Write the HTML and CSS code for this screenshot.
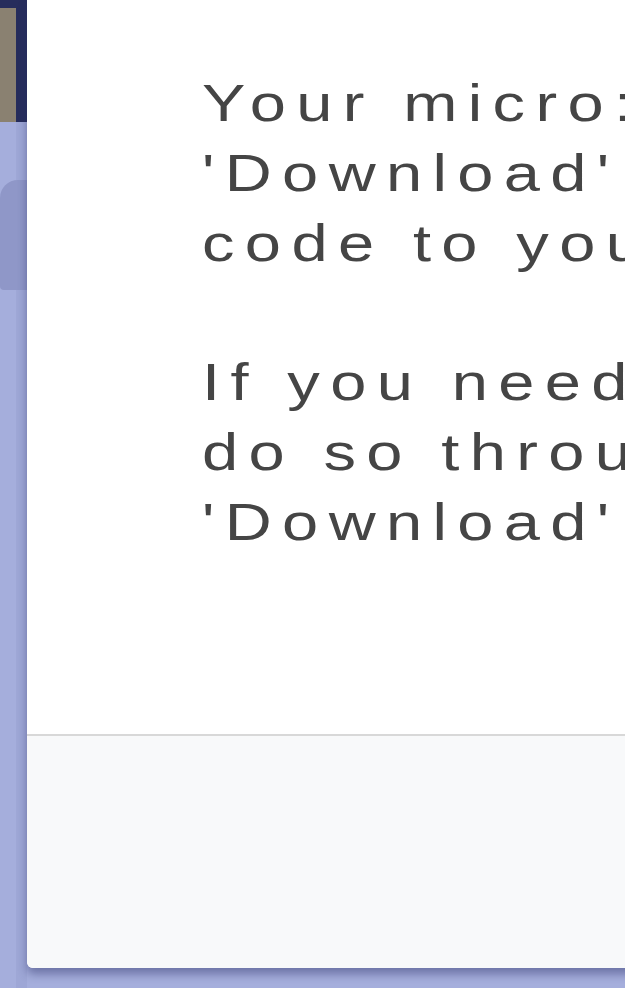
FILE: index.html
```html
<!DOCTYPE html>
<html>
<head>
<meta charset="utf-8">
<link rel="stylesheet" href="styles.css">
</head>
<body>
<div class="page">
  <div class="backdrop">
    <div class="topbar"><div class="tile"></div></div>
    <div class="patch"></div>
  </div>
  <div class="dialog">
    <div class="dialog-body">
      <div class="text">
        <p class="para"><span class="line">Your micro:bit is connected and ready!</span><span class="line">'Download' will now send your</span><span class="line">code to your micro:bit directly.</span></p>
        <p class="para"><span class="line">If you need to pair another device, you can</span><span class="line">do so through the gear menu or the</span><span class="line">'Download' menu.</span></p>
      </div>
    </div>
    <div class="dialog-footer"></div>
  </div>
</div>
</body>
</html>
```
FILE: styles.css
```css
html, body {
  margin: 0;
  padding: 0;
  height: 100%;
  overflow: hidden;
  background: #a5aedc;
}
.page {
  display: flex;
  height: 988px;
  width: 625px;
  overflow: hidden;
}
.backdrop {
  flex: 0 0 27px;
  display: flex;
  flex-direction: column;
  background: linear-gradient(90deg, #a5aedc 0 16px, #9ea7d6 16px 27px);
}
.topbar {
  height: 122px;
  background: #262d5c;
  padding: 8px 11px 0 0;
  box-sizing: border-box;
  display: flex;
}
.tile {
  flex: 1;
  background: #8a8171;
}
.patch {
  margin-top: 58px;
  height: 110px;
  background: #8f97c8;
  border-top-left-radius: 18px;
  border-bottom-left-radius: 4px;
}
.dialog {
  flex: 0 0 720px;
  height: 968px;
  background: #ffffff;
  border-bottom-left-radius: 6px;
  box-shadow: 0 6px 10px rgba(40, 44, 100, 0.45);
  display: flex;
  flex-direction: column;
  overflow: hidden;
}
.dialog-body {
  height: 734px;
  box-sizing: border-box;
  padding: 68px 0 0 175px;
  overflow: hidden;
}
.text {
  transform: scaleX(1.25);
  transform-origin: 0 0;
}
.para {
  margin: 0;
  font-family: "Liberation Sans", Arial, sans-serif;
  font-size: 52px;
  line-height: 70px;
  letter-spacing: 8.3px;
  color: #454545;
  white-space: nowrap;
}
.para + .para {
  margin-top: 69px;
}
.line {
  display: block;
}
.dialog-footer {
  flex: 1;
  border-top: 2px solid #d8d8d8;
  background: #f8f9fa;
}
```
